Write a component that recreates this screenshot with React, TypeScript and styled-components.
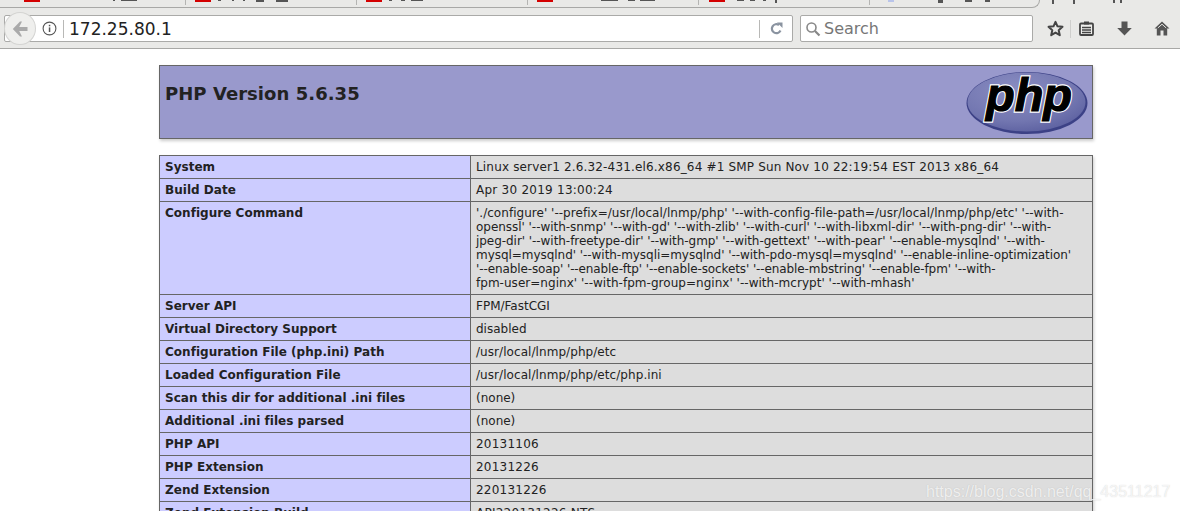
import React from 'react';
import styled, { createGlobalStyle } from 'styled-components';

const GlobalStyle = createGlobalStyle`
  html, body {
    margin: 0;
    padding: 0;
    background: #fff;
    overflow: hidden;
    height: 511px;
  }
  * {
    box-sizing: border-box;
  }
`;

const Page = styled.div`
  width: 1180px;
  height: 511px;
  overflow: hidden;
  position: relative;
  font-family: 'DejaVu Sans', sans-serif;
`;

const Chrome = styled.div`
  height: 49px;
  background: #e9e9e7;
  border-bottom: 1px solid #a8a8a6;
`;

const TabStrip = styled.div`
  height: 8px;
  display: flex;
`;

const Tab = styled.div<{ $w: number; $pad: number; $last?: boolean }>`
  width: ${p => p.$w}px;
  height: 8px;
  display: flex;
  align-items: flex-start;
  padding-left: ${p => p.$pad}px;
  border-bottom: 1px solid #a8a8a6;
  position: relative;
  ${p => p.$last && `
    border-right: 1px solid #a8a8a6;
    border-bottom-right-radius: 12px;
  `}
  ${p => !p.$last && `
    &::after {
      content: '';
      position: absolute;
      right: 0;
      top: 0;
      width: 1px;
      height: 5px;
      background: #b4b4b2;
    }
  `}
`;

const TabIcon = styled.div<{ $blue?: boolean }>`
  width: ${p => (p.$blue ? 6 : 16)}px;
  height: 2px;
  background: ${p => (p.$blue ? '#b9c4ea' : '#d40000')};
`;

const Mark = styled.div<{ $gap: number; $w: number; $h: number }>`
  margin-left: ${p => p.$gap}px;
  width: ${p => p.$w}px;
  height: ${p => p.$h}px;
  background: #555;
  flex: none;
`;

const Toolbar = styled.div`
  height: 40px;
  display: flex;
  align-items: flex-start;
  padding: 7px 0 0 4px;
`;

const UrlBar = styled.div`
  width: 789px;
  height: 27px;
  background: #fff;
  border: 1px solid #aaaaa8;
  border-radius: 2px;
  display: flex;
  align-items: center;
  position: relative;
  padding-left: 37px;
`;

const BackButton = styled.div`
  position: absolute;
  left: -1px;
  top: -4px;
  width: 32px;
  height: 33px;
  border-radius: 50%;
  background: #efefed;
  border: 1px solid #d4d4d2;
  display: flex;
  align-items: center;
  justify-content: center;
`;

const Divider = styled.div`
  width: 1px;
  height: 18px;
  margin-left: 6px;
  background: #b8b8b6;
`;

const UrlText = styled.span`
  font-size: 17px;
  color: #222;
  margin-left: 5px;
  flex: 1;
`;

const ReloadBox = styled.div`
  width: 33px;
  height: 18px;
  display: flex;
  align-items: center;
  justify-content: center;
  border-left: 1px solid #b8b8b6;
`;

const SearchBox = styled.div`
  width: 233px;
  height: 27px;
  margin-left: 7px;
  background: #fff;
  border: 1px solid #aaaaa8;
  border-radius: 2px;
  display: flex;
  align-items: center;
  padding-left: 4px;
  gap: 3px;
  font-size: 16px;
  color: #777;
`;

const ToolIcons = styled.div`
  display: flex;
  align-items: center;
  height: 27px;
  margin-left: 12px;
`;

const ToolButton = styled.div<{ $w: number }>`
  width: ${p => p.$w}px;
  display: flex;
  justify-content: center;
`;

const ToolSep = styled.div`
  width: 1px;
  height: 18px;
  margin-left: 5px;
  background: #cfcfcd;
`;

const Content = styled.div`
  width: 934px;
  margin-left: 159px;
  padding-top: 16px;
`;

const Header = styled.div`
  height: 74px;
  background: #9999cc;
  border: 1px solid #666;
  box-shadow: 1px 2px 3px #ccc;
  display: flex;
  justify-content: space-between;
  padding: 5px 4px 0 5px;
  margin-bottom: 16px;
`;

const Title = styled.h1`
  font-size: 18px;
  line-height: 45px;
  letter-spacing: 0.05px;
  margin: 0;
  font-weight: 700;
  color: #222;
`;

const InfoTable = styled.table`
  width: 934px;
  table-layout: fixed;
  border-collapse: collapse;
  box-shadow: 1px 2px 3px #ccc;
  font-size: 12px;
`;

const KeyCell = styled.td`
  width: 311px;
  background: #ccccff;
  border: 1px solid #666;
  padding: 4px 5px;
  line-height: 14px;
  font-weight: 700;
  letter-spacing: 0.025px;
  color: #222;
  vertical-align: baseline;
`;

const ValueCell = styled.td<{ $track: number }>`
  background: #dddddd;
  border: 1px solid #666;
  padding: 4px 5px;
  line-height: 14px;
  letter-spacing: ${p => p.$track}px;
  color: #222;
  vertical-align: baseline;
`;

const ConfigLine = styled.span<{ $track: number }>`
  display: block;
  white-space: nowrap;
  letter-spacing: ${p => p.$track}px;
`;

const Watermark = styled.div`
  position: absolute;
  left: 926px;
  top: 483px;
  font-family: 'Liberation Sans', sans-serif;
  font-size: 16px;
  color: rgba(255, 255, 255, 0.75);
  text-shadow: 0 0 1px rgba(120, 120, 120, 0.35);
  white-space: nowrap;
`;

const configure: [string, number][] = [
  ["'./configure' '--prefix=/usr/local/lnmp/php' '--with-config-file-path=/usr/local/lnmp/php/etc' '--with-", 0.03],
  ["openssl' '--with-snmp' '--with-gd' '--with-zlib' '--with-curl' '--with-libxml-dir' '--with-png-dir' '--with-", -0.035],
  ["jpeg-dir' '--with-freetype-dir' '--with-gmp' '--with-gettext' '--with-pear' '--enable-mysqlnd' '--with-", -0.05],
  ["mysql=mysqlnd' '--with-mysqli=mysqlnd' '--with-pdo-mysql=mysqlnd' '--enable-inline-optimization'", -0.043],
  ["'--enable-soap' '--enable-ftp' '--enable-sockets' '--enable-mbstring' '--enable-fpm' '--with-", -0.106],
  ["fpm-user=nginx' '--with-fpm-group=nginx' '--with-mcrypt' '--with-mhash'", 0.03],
];

const rows: [string, React.ReactNode, number][] = [
  ['System', 'Linux server1 2.6.32-431.el6.x86_64 #1 SMP Sun Nov 10 22:19:54 EST 2013 x86_64', 0.167],
  ['Build Date', 'Apr 30 2019 13:00:24', 0.25],
  [
    'Configure Command',
    configure.map(([line, track]) => (
      <ConfigLine key={line} $track={track}>
        {line}
      </ConfigLine>
    )),
    0,
  ],
  ['Server API', 'FPM/FastCGI', 0],
  ['Virtual Directory Support', 'disabled', 0],
  ['Configuration File (php.ini) Path', '/usr/local/lnmp/php/etc', 0.065],
  ['Loaded Configuration File', '/usr/local/lnmp/php/etc/php.ini', 0.065],
  ['Scan this dir for additional .ini files', '(none)', 0],
  ['Additional .ini files parsed', '(none)', 0],
  ['PHP API', '20131106', 0.22],
  ['PHP Extension', '20131226', 0.22],
  ['Zend Extension', '220131226', 0.22],
  ['Zend Extension Build', 'API220131226,NTS', 0.25],
];

// [gap, width, height] of the glyph bottoms the screenshot cuts off at the top
type MarkData = [number, number, number];

const tabs: { w: number; pad: number; blue?: boolean; last?: boolean; marks: MarkData[] }[] = [
  { w: 186, pad: 24, marks: [[73, 2, 1], [6, 16, 1]] },
  { w: 171, pad: 9, marks: [[7, 3, 1], [11, 2, 1], [9, 2, 1], [11, 8, 2], [12, 12, 2]] },
  { w: 171, pad: 9, marks: [[7, 3, 1], [9, 4, 1], [6, 12, 1]] },
  { w: 171, pad: 9, marks: [[48, 17, 1], [10, 7, 1], [5, 15, 1]] },
  { w: 171, pad: 10, marks: [[12, 7, 1], [6, 5, 1], [8, 3, 1], [9, 2, 3]] },
  { w: 170, pad: 18, blue: true, last: true, marks: [[44, 5, 3], [22, 7, 2], [13, 5, 2]] },
];

const trailing: MarkData[] = [[12, 2, 4], [19, 2, 4], [38, 2, 3], [5, 2, 3]];

const logoText = {
  x: 20,
  y: 40,
  fontFamily: "'Liberation Sans', sans-serif",
  fontSize: 46,
  fontWeight: 700,
  fontStyle: 'italic',
  textLength: 86,
  lengthAdjust: 'spacingAndGlyphs',
} as const;

const PhpLogo = () => (
  <svg width="122" height="64" viewBox="0 0 122 64">
    <defs>
      <radialGradient id="oval" cx="40%" cy="30%" r="75%">
        <stop offset="0%" stopColor="#8a8dc2" />
        <stop offset="70%" stopColor="#7276b0" />
        <stop offset="100%" stopColor="#5c60a0" />
      </radialGradient>
    </defs>
    <ellipse cx="61" cy="32" rx="60.5" ry="31" fill="#3c4186" />
    <ellipse cx="60.5" cy="31" rx="59" ry="29.5" fill="url(#oval)" />
    <text {...logoText} fill="#fff" stroke="#fff" strokeWidth="3.4" aria-hidden="true">
      php
    </text>
    <text {...logoText} fill="#000" stroke="#000" strokeWidth="1.2">
      php
    </text>
  </svg>
);

export default function App() {
  return (
    <Page>
      <GlobalStyle />
      <Chrome>
        <TabStrip>
          {tabs.map((t, i) => (
            <Tab key={i} $w={t.w} $pad={t.pad} $last={t.last}>
              <TabIcon $blue={t.blue} />
              {t.marks.map(([gap, w, h], j) => (
                <Mark key={j} $gap={gap} $w={w} $h={h} />
              ))}
            </Tab>
          ))}
          {trailing.map(([gap, w, h], j) => (
            <Mark key={j} $gap={gap} $w={w} $h={h} />
          ))}
        </TabStrip>
        <Toolbar>
          <UrlBar>
            <BackButton>
              <svg width="16" height="16" viewBox="0 0 16 16">
                <path d="M8 0.5 L0.8 8 L8 15.5 L10 15.5 L7.2 10 H15.5 V6 H7.2 L10 0.5 Z" fill="#aaa" />
              </svg>
            </BackButton>
            <svg width="15" height="15" viewBox="0 0 15 15">
              <circle cx="7.5" cy="7.5" r="6.4" fill="none" stroke="#555" strokeWidth="1.1" />
              <rect x="6.8" y="6.4" width="1.5" height="4.6" fill="#555" />
              <rect x="6.8" y="3.8" width="1.5" height="1.5" fill="#555" />
            </svg>
            <Divider />
            <UrlText>172.25.80.1</UrlText>
            <ReloadBox>
              <svg width="13" height="13" viewBox="0 0 13 13">
                <path d="M10.5 8.5 A4.5 4.5 0 1 1 9 3" fill="none" stroke="#8a93a0" strokeWidth="2.2" />
                <path d="M7 0.5 H12.5 V6 Z" fill="#8a93a0" />
              </svg>
            </ReloadBox>
          </UrlBar>
          <SearchBox>
            <svg width="16" height="16" viewBox="0 0 16 16">
              <circle cx="6.5" cy="6.5" r="4.5" fill="none" stroke="#888" strokeWidth="1.6" />
              <path d="M10 10 L14.5 14.5" stroke="#888" strokeWidth="2.2" />
            </svg>
            Search
          </SearchBox>
          <ToolIcons>
            <ToolButton $w={20}>
              <svg width="17" height="17" viewBox="0 0 17 17">
                <path d="M8.5 1.8 L10.5 6.3 L15.5 6.8 L11.7 10.2 L12.8 15.2 L8.5 12.6 L4.2 15.2 L5.3 10.2 L1.5 6.8 L6.5 6.3 Z" fill="none" stroke="#444" strokeWidth="2" strokeLinejoin="round" />
              </svg>
            </ToolButton>
            <ToolSep />
            <ToolButton $w={30}>
              <svg width="15" height="15" viewBox="0 0 15 15">
                <rect x="1" y="2.5" width="13" height="11.5" rx="1" fill="#efefed" stroke="#444" strokeWidth="1.8" />
                <rect x="5" y="0.5" width="5" height="3" fill="#444" />
                <path d="M3 6.5 H12 M3 9 H12 M3 11.5 H12" stroke="#444" strokeWidth="1.3" />
              </svg>
            </ToolButton>
            <ToolButton $w={46}>
              <svg width="15" height="15" viewBox="0 0 15 15">
                <path d="M4.5 0.5 H10.5 V7 H14.8 L7.5 14.5 L0.2 7 H4.5 Z" fill="#555" />
              </svg>
            </ToolButton>
            <ToolButton $w={30}>
              <svg width="16" height="15" viewBox="0 0 16 15">
                <path d="M8 0.5 L0.5 7.5 H2.8 V14.5 H6.5 V9.5 H9.5 V14.5 H13.2 V7.5 H15.5 Z" fill="#555" />
                <path d="M3.8 7 L8 3.2 L12.2 7" fill="none" stroke="#efefed" strokeWidth="0.9" />
              </svg>
            </ToolButton>
          </ToolIcons>
        </Toolbar>
      </Chrome>
      <Content>
        <Header>
          <Title>PHP Version 5.6.35</Title>
          <PhpLogo />
        </Header>
        <InfoTable>
          <tbody>
            {rows.map(([k, v, track]) => (
              <tr key={k}>
                <KeyCell>{k}</KeyCell>
                <ValueCell $track={track}>{v}</ValueCell>
              </tr>
            ))}
          </tbody>
        </InfoTable>
      </Content>
      <Watermark>https://blog.csdn.net/qq_43511217</Watermark>
    </Page>
  );
}
